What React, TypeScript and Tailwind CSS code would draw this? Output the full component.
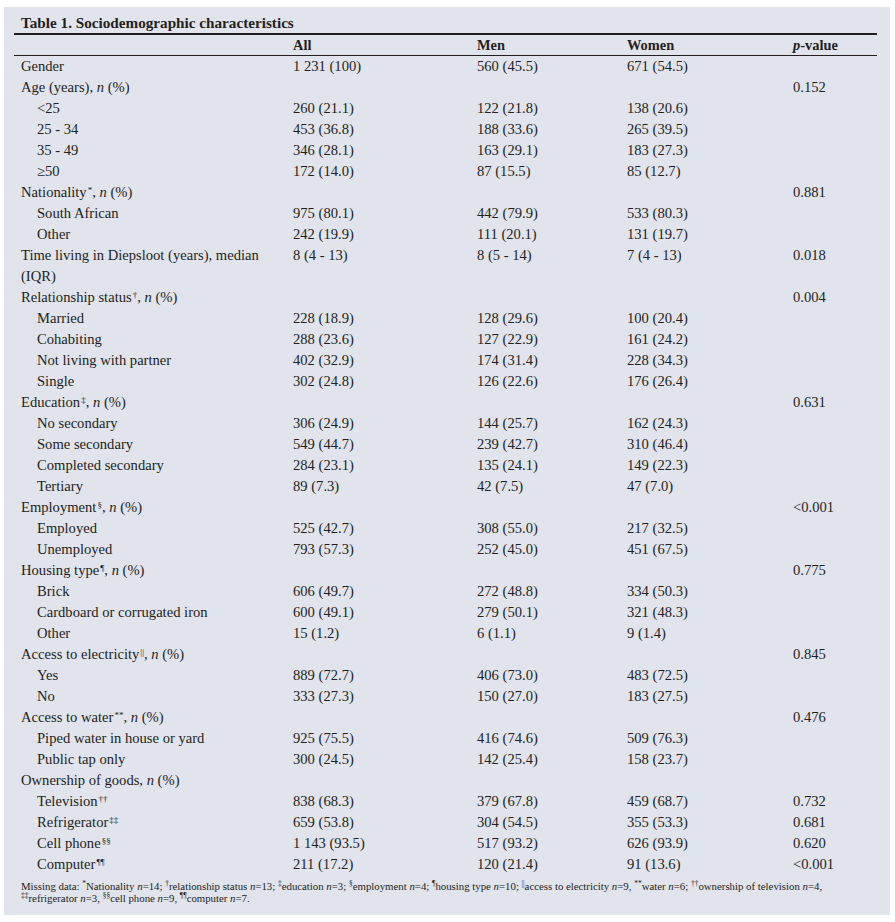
import React from "react";

type Row = {
  label: React.ReactNode;
  indent?: boolean;
  all?: string;
  men?: string;
  women?: string;
  p?: string;
};

const It = ({ children }: { children: React.ReactNode }) => <i>{children}</i>;
const Sup = ({ children }: { children: React.ReactNode }) => <sup className="text-[9px] ml-px">{children}</sup>;
const FSup = ({ children }: { children: React.ReactNode }) => <sup className="text-[7.5px]">{children}</sup>;

const n = <It>n</It>;

const ROWS: Row[] = [
  { label: "Gender", all: "1 231 (100)", men: "560 (45.5)", women: "671 (54.5)" },
  { label: <>Age (years), {n} (%)</>, p: "0.152" },
  { label: "<25", indent: true, all: "260 (21.1)", men: "122 (21.8)", women: "138 (20.6)" },
  { label: "25 - 34", indent: true, all: "453 (36.8)", men: "188 (33.6)", women: "265 (39.5)" },
  { label: "35 - 49", indent: true, all: "346 (28.1)", men: "163 (29.1)", women: "183 (27.3)" },
  { label: "≥50", indent: true, all: "172 (14.0)", men: "87 (15.5)", women: "85 (12.7)" },
  { label: <>Nationality<Sup>*</Sup>, {n} (%)</>, p: "0.881" },
  { label: "South African", indent: true, all: "975 (80.1)", men: "442 (79.9)", women: "533 (80.3)" },
  { label: "Other", indent: true, all: "242 (19.9)", men: "111 (20.1)", women: "131 (19.7)" },
  { label: "Time living in Diepsloot (years), median", all: "8 (4 - 13)", men: "8 (5 - 14)", women: "7 (4 - 13)", p: "0.018" },
  { label: "(IQR)" },
  { label: <>Relationship status<Sup>†</Sup>, {n} (%)</>, p: "0.004" },
  { label: "Married", indent: true, all: "228 (18.9)", men: "128 (29.6)", women: "100 (20.4)" },
  { label: "Cohabiting", indent: true, all: "288 (23.6)", men: "127 (22.9)", women: "161 (24.2)" },
  { label: "Not living with partner", indent: true, all: "402 (32.9)", men: "174 (31.4)", women: "228 (34.3)" },
  { label: "Single", indent: true, all: "302 (24.8)", men: "126 (22.6)", women: "176 (26.4)" },
  { label: <>Education<Sup>‡</Sup>, {n} (%)</>, p: "0.631" },
  { label: "No secondary", indent: true, all: "306 (24.9)", men: "144 (25.7)", women: "162 (24.3)" },
  { label: "Some secondary", indent: true, all: "549 (44.7)", men: "239 (42.7)", women: "310 (46.4)" },
  { label: "Completed secondary", indent: true, all: "284 (23.1)", men: "135 (24.1)", women: "149 (22.3)" },
  { label: "Tertiary", indent: true, all: "89 (7.3)", men: "42 (7.5)", women: "47 (7.0)" },
  { label: <>Employment<Sup>§</Sup>, {n} (%)</>, p: "<0.001" },
  { label: "Employed", indent: true, all: "525 (42.7)", men: "308 (55.0)", women: "217 (32.5)" },
  { label: "Unemployed", indent: true, all: "793 (57.3)", men: "252 (45.0)", women: "451 (67.5)" },
  { label: <>Housing type<Sup>¶</Sup>, {n} (%)</>, p: "0.775" },
  { label: "Brick", indent: true, all: "606 (49.7)", men: "272 (48.8)", women: "334 (50.3)" },
  { label: "Cardboard or corrugated iron", indent: true, all: "600 (49.1)", men: "279 (50.1)", women: "321 (48.3)" },
  { label: "Other", indent: true, all: "15 (1.2)", men: "6 (1.1)", women: "9 (1.4)" },
  { label: <>Access to electricity<Sup>||</Sup>, {n} (%)</>, p: "0.845" },
  { label: "Yes", indent: true, all: "889 (72.7)", men: "406 (73.0)", women: "483 (72.5)" },
  { label: "No", indent: true, all: "333 (27.3)", men: "150 (27.0)", women: "183 (27.5)" },
  { label: <>Access to water<Sup>**</Sup>, {n} (%)</>, p: "0.476" },
  { label: "Piped water in house or yard", indent: true, all: "925 (75.5)", men: "416 (74.6)", women: "509 (76.3)" },
  { label: "Public tap only", indent: true, all: "300 (24.5)", men: "142 (25.4)", women: "158 (23.7)" },
  { label: <>Ownership of goods, {n} (%)</> },
  { label: <>Television<Sup>††</Sup></>, indent: true, all: "838 (68.3)", men: "379 (67.8)", women: "459 (68.7)", p: "0.732" },
  { label: <>Refrigerator<Sup>‡‡</Sup></>, indent: true, all: "659 (53.8)", men: "304 (54.5)", women: "355 (53.3)", p: "0.681" },
  { label: <>Cell phone<Sup>§§</Sup></>, indent: true, all: "1 143 (93.5)", men: "517 (93.2)", women: "626 (93.9)", p: "0.620" },
  { label: <>Computer<Sup>¶¶</Sup></>, indent: true, all: "211 (17.2)", men: "120 (21.4)", women: "91 (13.6)", p: "<0.001" },
];

const GRID = "grid grid-cols-[272px_184px_150px_166px_1fr] pl-[7px]";

export default function App() {
  return (
    <div className="bg-white w-[895px] h-[922px] pt-[7px] pl-[4px]">
      <div
        className="bg-[#e1e3ed] w-[886px] h-[908px] pl-[10px] pr-[13px] text-[#231f20]"
        style={{ fontFamily: '"Liberation Serif", "Times New Roman", serif' }}
      >
        <div className="pt-[6px] pl-[7px] h-[26px] leading-[20px] text-[15.2px] font-bold">
          Table 1. Sociodemographic characteristics
        </div>
        <div className="h-[2px] bg-[#231f20]" />
        <div className={`${GRID} h-[20px] leading-[20px] text-[14.4px] font-bold`}>
          <div />
          <div>All</div>
          <div>Men</div>
          <div>Women</div>
          <div>
            <i>p</i>-value
          </div>
        </div>
        <div className="h-px bg-[#231f20]" />
        <div className="text-[14.6px]">
          {ROWS.map((r, i) => (
            <div key={i} className={`${GRID} h-[21px] leading-[21px]`}>
              <div className={r.indent ? "pl-4 whitespace-nowrap" : "whitespace-nowrap"}>{r.label}</div>
              <div>{r.all}</div>
              <div>{r.men}</div>
              <div>{r.women}</div>
              <div>{r.p}</div>
            </div>
          ))}
        </div>
        <div className="mt-[5px] pl-[7px] text-[10.8px] leading-[12px] whitespace-nowrap">
          <div>
            Missing data: <FSup>*</FSup>Nationality {n}=14; <FSup>†</FSup>relationship status {n}=13; <FSup>‡</FSup>education {n}=3;{" "}
            <FSup>§</FSup>employment {n}=4; <FSup>¶</FSup>housing type {n}=10; <FSup>||</FSup>access to electricity {n}=9,{" "}
            <FSup>**</FSup>water {n}=6; <FSup>††</FSup>ownership of television {n}=4,
          </div>
          <div>
            <FSup>‡‡</FSup>refrigerator {n}=3, <FSup>§§</FSup>cell phone {n}=9, <FSup>¶¶</FSup>computer {n}=7.
          </div>
        </div>
      </div>
    </div>
  );
}
